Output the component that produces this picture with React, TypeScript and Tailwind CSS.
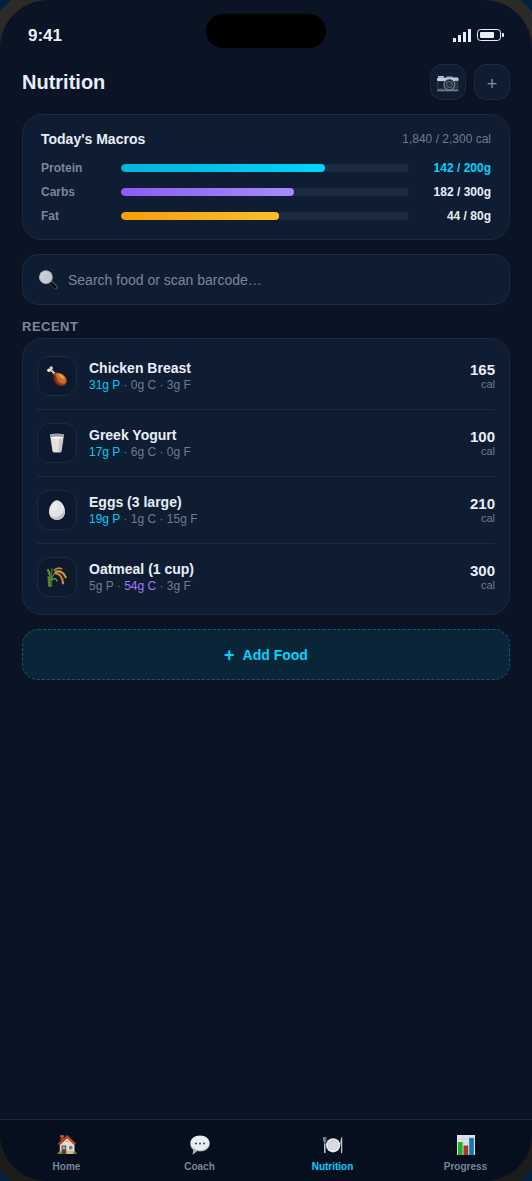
import type { ComponentType, ReactNode } from "react";
import clsx from "clsx";

type IconProps = { className?: string };

function CameraIcon({ className }: IconProps) {
  return (
    <svg viewBox="0 0 22 16" className={className} aria-hidden="true">
      <rect x="1" y="0" width="6" height="3" rx="1" fill="#b9c3cf" />
      <path d="M8.500 2 10 .4h5.500L17 2Z" fill="#aeb9c6" />
      <rect x="17.500" y="1" width="3" height="2" fill="#7c8998" />
      <rect x="0" y="1.800" width="21.500" height="13.400" rx="1.200" fill="#2b3542" />
      <rect x="0" y="1.800" width="21.500" height="3.200" rx="1" fill="#c3ccd7" />
      <rect x="0" y="13.400" width="21.500" height="1.800" rx=".8" fill="#717d8d" />
      <rect x="1.500" y="6" width="4.500" height="6" fill="#161e29" />
      <rect x="18" y="3.600" width="2" height="1.400" fill="#e0a04a" />
      <circle cx="12.400" cy="8.500" r="5.800" fill="#8090a5" />
      <circle cx="12.400" cy="8.500" r="4.900" fill="#1f2a3a" />
      <circle cx="12.400" cy="8.500" r="3.400" fill="#51647d" />
      <circle cx="12.400" cy="8.500" r="2.200" fill="#111a27" />
      <path d="m11.400 9.500 2-2" stroke="#8497b0" strokeWidth=".8" />
    </svg>
  );
}

function MagnifierIcon({ className }: IconProps) {
  return (
    <svg viewBox="0 0 20 20" className={className} aria-hidden="true">
      <path d="m11.500 11.500 2.500 2.500" stroke="#8a93a0" strokeWidth="2.400" />
      <path d="m13.300 13.300 4.900 4.700" stroke="#59626f" strokeWidth="3.800" strokeLinecap="round" />
      <path d="m13.400 13.800 4.300 4.200" stroke="#05070b" strokeWidth="2.800" strokeLinecap="round" />
      <circle cx="7.800" cy="7.600" r="7.300" fill="#99a3b0" />
      <circle cx="7.600" cy="7.400" r="6.500" fill="#c3cad3" />
      <path d="M3.500 8a4.500 4.500 0 0 1 6-4.500" stroke="#d3d9e0" strokeWidth="1.400" fill="none" />
    </svg>
  );
}

function DrumstickIcon({ className }: IconProps) {
  return (
    <svg viewBox="0 0 20 20" className={className} aria-hidden="true">
      <path d="m3 3 6.500 6.500" stroke="#d3c3ae" strokeWidth="2.200" />
      <circle cx="1.900" cy="4.200" r="1.700" fill="#f2ede5" />
      <circle cx="4.200" cy="1.900" r="1.700" fill="#dcd4c9" />
      <path d="M6.500 8.200c1.500-1.700 4.200-2.200 7-1.200 3.800 1.300 6.300 4.500 6.400 8 0 2.800-1.800 4.700-4.700 4.800C11 20 8 17.600 7 14.200 6.400 12 5.700 9.800 6.500 8.200Z" fill="#803316" />
      <path d="M8.200 7.700c3-1.700 8 .2 10 3.600 1.700 3 1.200 6-1.200 6.600-3.500.9-6.900-3.300-8.800-10.200Z" fill="#c56f25" />
      <path d="M11 8.200c3.300-.2 6.200 2.100 6.700 4.800-2.700-.6-5-2.300-6.700-4.800Z" fill="#e8ae5f" />
      <path d="M9.500 14c1.800 2.700 4.200 4.200 7 4" stroke="#ba3a17" strokeWidth="1.300" fill="none" />
      <path d="M6.500 9.500c-.5 3 .6 6.200 2.800 8.200" stroke="#391e19" strokeWidth="1.600" fill="none" />
    </svg>
  );
}

function GlassIcon({ className }: IconProps) {
  return (
    <svg viewBox="0 0 20 20" className={className} aria-hidden="true">
      <path d="M2.800 1.500h14.400l-2.400 16.200c-.2 1.400-1.200 2-2.500 2H7.700c-1.300 0-2.300-.6-2.500-2Z" fill="#8992a0" />
      <path d="M3.700 4h12.600l-2 13.200c-.1 1-.7 1.700-1.700 1.700H7.400c-1 0-1.600-.7-1.700-1.700Z" fill="#e6e3de" />
      <path d="M12.500 4.500H16l-1.900 12.700c-.1 1-.7 1.400-1.700 1.400h-1.200Z" fill="#cbc8c6" />
      <ellipse cx="10" cy="2.200" rx="7.200" ry="1.800" fill="#a7afba" />
      <ellipse cx="10" cy="2.600" rx="5.800" ry="1" fill="#8992a0" />
      <ellipse cx="10" cy="4.700" rx="6" ry="1.200" fill="#f5f3ef" />
    </svg>
  );
}

function EggIcon({ className }: IconProps) {
  return (
    <svg viewBox="0 0 20 20" className={className} aria-hidden="true">
      <path d="M10 .2c4.300 0 8 6.300 8 11.200 0 5-3.200 8.300-8 8.300s-8-3.300-8-8.300C2 6.500 5.700.2 10 .2Z" fill="#e2e3e5" />
      <path d="M17.600 9c1 5.800-1.800 10.500-7.600 10.700-3 0-5.300-1.200-6.700-3.400C10 18.500 15 15.700 17.600 9Z" fill="#c2c3c5" />
      <ellipse cx="7.600" cy="7" rx="2.700" ry="4" transform="rotate(25 7.600 7)" fill="#ececee" />
    </svg>
  );
}

function RiceIcon({ className }: IconProps) {
  return (
    <svg viewBox="0 0 20 20" className={className} aria-hidden="true">
      <g fill="none" strokeLinecap="round">
        <path d="M3 19.500V8L1 3" stroke="#62862e" strokeWidth="2.200" />
        <path d="M4.200 19.500V7L5 2" stroke="#3f6f29" strokeWidth="1.600" />
        <path d="M2 19 1.200 10" stroke="#4f8132" strokeWidth="1.600" />
        <path d="M4.500 12c1-4 3-6 5.500-7" stroke="#8a8137" strokeWidth="1.200" />
        <path d="M5 13c1.800-2 3-2.200 5.200 1" stroke="#65963b" strokeWidth="1.400" />
        <path d="M7.500 3c2.500-2 4.500-2.400 7-1.300" stroke="#b98038" strokeWidth="1.800" />
        <path d="M8.500 5.200c4-2 8-.5 10.200 5" stroke="#cf9447" strokeWidth="2.200" />
        <path d="M9 6.400c4 .5 6.500 4.500 7 10" stroke="#c6883b" strokeWidth="2.200" />
        <path d="M10.500 6c2.800.6 5 3 6.200 7" stroke="#7c4a1c" strokeWidth=".8" />
      </g>
    </svg>
  );
}

function HouseIcon({ className }: IconProps) {
  return (
    <svg viewBox="0 0 20 20" className={className} aria-hidden="true">
      <rect x="3.500" y=".8" width="3.300" height="6" fill="#a5392b" />
      <rect x="3" y=".3" width="4.300" height="1.500" fill="#d15b43" />
      <path d="M2.800 9 10.500 2l7 7v10H2.800Z" fill="#e9dcc2" />
      <path d="M2.800 15.500h14.700V19H2.800Z" fill="#d2ba91" />
      <path d="m1.500 9.500 8.700-8.200 8.300 8" stroke="#c33e24" strokeWidth="2" fill="none" />
      <path d="m2.400 10.200 7.800-7.300 7.500 7.200" stroke="#732417" strokeWidth=".7" fill="none" />
      <rect x="4.500" y="10.500" width="4.700" height="8.500" fill="#613d2c" />
      <rect x="5.400" y="11.400" width="2.900" height="3" fill="#91abc6" />
      <rect x="11" y="10" width="5.300" height="5.200" fill="#fff6e0" />
      <rect x="11.800" y="10.700" width="3.700" height="3.800" fill="#607fae" />
      <path d="M8.700 6.500h3" stroke="#b6a58a" strokeWidth="1" />
      <path d="M.4 19c0-1.600 1-2.500 2-2.500S4.200 17.400 4.200 19ZM16 19c0-1.600 1-2.500 1.900-2.500S19.600 17.400 19.600 19Z" fill="#5d8b35" />
    </svg>
  );
}

function SpeechIcon({ className }: IconProps) {
  return (
    <svg viewBox="0 0 20 20" className={className} aria-hidden="true">
      <path d="M10 .4c5.600 0 9.800 3.400 9.800 8s-4.200 8-9.800 8c-1 0-2-.1-2.900-.3C5.700 17.700 4 19 2 19.500c1-1.300 1.400-3 1.100-4.700C1.300 13.300.2 11 .2 8.400c0-4.600 4.200-8 9.800-8Z" fill="#acb4bf" />
      <path d="M10 .7c5.300 0 9.200 3 9.200 7.200s-3.900 7.300-9.200 7.300S.8 12.100.8 7.900 4.700.7 10 .7Z" fill="#e8edf3" />
      <circle cx="6" cy="8.500" r="1" fill="#384355" />
      <circle cx="10" cy="8.500" r="1" fill="#384355" />
      <circle cx="14" cy="8.500" r="1" fill="#384355" />
    </svg>
  );
}

function PlateIcon({ className }: IconProps) {
  return (
    <svg viewBox="0 0 20 20" className={className} aria-hidden="true">
      <path d="M.6 2v3.800c0 .8.500 1.200 1.100 1.200s1.100-.4 1.100-1.200V2M1.700 2v15.500" stroke="#a7b2bf" strokeWidth=".8" fill="none" />
      <path d="M1.800 9v8.500" stroke="#ced5dd" strokeWidth="1.200" strokeLinecap="round" />
      <path d="M19.200 1.500c-1.500 1.800-2 4.800-1.700 8h1.700Z" fill="#ccd4dc" />
      <path d="M18.600 9v8.500" stroke="#bbc5cf" strokeWidth="1.300" strokeLinecap="round" />
      <circle cx="10.100" cy="10.300" r="7.100" fill="#e6e8ea" />
      <circle cx="10.100" cy="10.300" r="5" fill="#bec3c8" />
      <circle cx="10.300" cy="10.500" r="4.500" fill="#d9dcdf" />
    </svg>
  );
}

function ChartIcon({ className }: IconProps) {
  return (
    <svg viewBox="0 0 20 20" className={className} aria-hidden="true">
      <rect x="1" width="18" height="20" fill="#e1e5ea" />
      <path d="M1 4h18M1 8h18M1 12h18M1 16h18M7 0v20M13 0v20" stroke="#c4cbd5" strokeWidth=".6" />
      <rect x="2" y="7" width="4.600" height="13" fill="#13b526" />
      <rect x="7.500" y="10.500" width="4.700" height="9.500" fill="#aa3526" />
      <rect x="13.200" y="2.800" width="4.700" height="17.200" fill="#1879ad" />
    </svg>
  );
}

const macros = [
  { name: "Protein", current: 142, goal: 200, fill: "bg-linear-to-r from-[#00b4d8] to-[#00d4ff]", value: "text-[#00d4ff]" },
  { name: "Carbs", current: 182, goal: 300, fill: "bg-linear-to-r from-[#8b5cf6] to-[#a78bfa]", value: "text-[#e8eef8]" },
  { name: "Fat", current: 44, goal: 80, fill: "bg-linear-to-r from-[#f59e0b] to-[#fbbf24]", value: "text-[#e8eef8]" },
];

const foods: { name: string; icon: ComponentType<IconProps>; detail: ReactNode; cal: number }[] = [
  { name: "Chicken Breast", icon: DrumstickIcon, detail: <><Protein>31g P</Protein> · 0g C · 3g F</>, cal: 165 },
  { name: "Greek Yogurt", icon: GlassIcon, detail: <><Protein>17g P</Protein> · 6g C · 0g F</>, cal: 100 },
  { name: "Eggs (3 large)", icon: EggIcon, detail: <><Protein>19g P</Protein> · 1g C · 15g F</>, cal: 210 },
  { name: "Oatmeal (1 cup)", icon: RiceIcon, detail: <>5g P · <span className="text-[#a07cf5]">54g C</span> · 3g F</>, cal: 300 },
];

const tabs = [
  { label: "Home", icon: HouseIcon },
  { label: "Coach", icon: SpeechIcon },
  { label: "Nutrition", icon: PlateIcon, active: true },
  { label: "Progress", icon: ChartIcon },
];

function Protein({ children }: { children: ReactNode }) {
  return <span className="text-[#00cdf7]">{children}</span>;
}

function StatusBar() {
  return (
    <div className="grid grid-cols-[1fr_120px_1fr] items-center px-7 pt-3.5">
      <span className="pt-2.5 text-[17px] leading-5 font-bold">9:41</span>
      <div className="h-[34px] rounded-full bg-black" />
      <div className="flex items-center justify-end gap-1.5 pt-2">
        <svg viewBox="0 0 18 13" className="w-[18px] h-[13px]" fill="#e8eef8" aria-hidden="true">
          <rect x="0" y="9" width="3" height="4" rx=".5" />
          <rect x="5" y="6" width="3" height="7" rx=".5" />
          <rect x="10" y="3" width="3" height="10" rx=".5" />
          <rect x="15" y="0" width="3" height="13" rx=".5" />
        </svg>
        <svg viewBox="0 0 27 12" className="w-[27px] h-3" aria-hidden="true">
          <rect x=".5" y=".5" width="23" height="11" rx="3" fill="none" stroke="#e8eef8" />
          <rect x="3" y="3" width="14" height="6" rx="1" fill="#e8eef8" />
          <path d="M25 4h1a1 1 0 0 1 1 1v2a1 1 0 0 1-1 1h-1Z" fill="#e8eef8" />
        </svg>
      </div>
    </div>
  );
}

export default function App() {
  return (
    <div className="overflow-hidden bg-[#04213e] font-['Liberation_Sans',Arial,sans-serif] text-[#e8eef8]">
      {/* Device frame */}
      <div className="-m-3 rounded-[60px] bg-linear-to-b from-[#2d2b29] to-[#1b1c1a] p-3">
        <div className="flex min-h-screen flex-col overflow-hidden rounded-[48px] bg-[#0a1425]">
          <StatusBar />

          <main className="flex flex-1 flex-col px-[22px] pt-4 pb-6">
            <header className="flex items-center justify-between">
              <h1 className="text-xl leading-6 font-bold">Nutrition</h1>
              <div className="flex gap-2">
                <button
                  type="button"
                  aria-label="Scan food with camera"
                  className="flex size-9 items-center justify-center rounded-xl border border-[#1c2b41] bg-[#0f1d32] pt-1"
                >
                  <CameraIcon className="h-4 w-[22px]" />
                </button>
                <button
                  type="button"
                  aria-label="Add entry"
                  className="flex size-9 items-center justify-center rounded-xl border border-[#1c2b41] bg-[#0f1d32] pt-1 text-lg text-[#8492a6]"
                >
                  +
                </button>
              </div>
            </header>

            {/* Macros */}
            <section className="mt-3.5 rounded-[20px] border border-[#1c2b41] bg-[#0f1d32] px-[18px] py-4">
              <div className="mb-3.5 flex items-center justify-between">
                <h2 className="text-sm leading-4 font-bold">Today&apos;s Macros</h2>
                <span className="text-xs leading-4 text-[#6e7b8e]">1,840 / 2,300 cal</span>
              </div>
              <div className="space-y-2.5">
                {macros.map(({ name, current, goal, fill, value }) => (
                  <div key={name} className="flex items-center gap-3 text-xs leading-[14px] font-bold">
                    <span className="w-[68px] text-[#7a8799]">{name}</span>
                    <div className="h-2 flex-1 overflow-hidden rounded-full bg-[#1c2a42]">
                      <div
                        className={clsx("h-full rounded-full", fill)}
                        style={{ width: `${Math.floor((current / goal) * 100)}%` }}
                      />
                    </div>
                    <span className={clsx("w-[70px] text-right", value)}>
                      {current} / {goal}g
                    </span>
                  </div>
                ))}
              </div>
            </section>

            <label className="mt-3.5 flex items-center gap-2.5 rounded-2xl border border-[#1c2b41] bg-[#0f1d32] px-[15px] py-[15px]">
              <MagnifierIcon className="w-5 h-[19px]" />
              <input
                type="text"
                aria-label="Search food"
                placeholder="Search food or scan barcode…"
                className="h-[17px] min-w-0 flex-1 bg-transparent text-sm outline-none placeholder:text-[#7a8799]"
              />
            </label>

            <h2 className="mt-3.5 mb-1 text-[13px] leading-[15px] font-bold tracking-[0.5px] text-[#7a8799] uppercase">
              Recent
            </h2>
            <ul className="rounded-[20px] border border-[#1c2b41] bg-[#0f1d32] px-3.5 py-1">
              {foods.map(({ name, icon: Icon, detail, cal }) => (
                <li key={name} className="flex items-center gap-3 border-b border-[#1c2b41] py-[13px] last:border-0">
                  <div className="flex size-10 shrink-0 items-center justify-center rounded-xl border border-[#1c2b41] bg-[#0d192d]">
                    <Icon className="size-5" />
                  </div>
                  <div className="flex-1">
                    <p className="mb-0.5 text-sm leading-4 font-bold">{name}</p>
                    <p className="text-xs leading-[14px] text-[#6e7b8e]">{detail}</p>
                  </div>
                  <div className="text-right">
                    <p className="text-[15px] leading-4 font-bold">{cal}</p>
                    <p className="text-[11px] leading-3 text-[#6e7b8e]">cal</p>
                  </div>
                </li>
              ))}
            </ul>

            <button
              type="button"
              className="mt-3.5 flex h-[51px] items-center justify-center gap-2 rounded-2xl border border-dashed border-[#0b5a75] bg-[#0a2438] text-sm font-bold text-[#00d4ff]"
            >
              <span className="text-lg">+</span>
              Add Food
            </button>
          </main>

          <nav className="grid grid-cols-4 border-t border-[#172a40] bg-[#050f1d] pt-[15px] pb-2">
            {tabs.map(({ label, icon: Icon, active }) => (
              <a
                key={label}
                href={`#${label.toLowerCase()}`}
                className={clsx(
                  "flex flex-col items-center gap-1.5 text-[10px] leading-3 font-bold",
                  active ? "text-[#00d4ff]" : "text-[#75859b]"
                )}
              >
                <Icon className="size-5" />
                {label}
              </a>
            ))}
          </nav>
        </div>
      </div>
    </div>
  );
}
